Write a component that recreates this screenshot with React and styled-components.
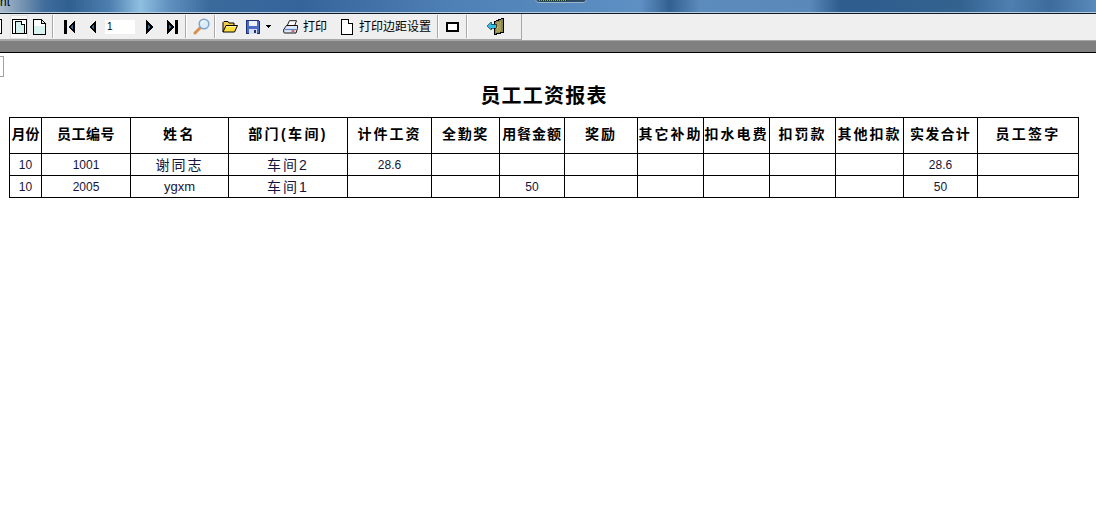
import React from "react";
import styled, { createGlobalStyle } from "styled-components";

const GlobalStyle = createGlobalStyle`
  html, body {
    margin: 0;
    padding: 0;
    background: #fff;
    overflow: hidden;
  }
`;

const Page = styled.div`
  width: 1096px;
  height: 528px;
  display: flex;
  flex-direction: column;
  font-family: "Liberation Sans", "Noto Sans CJK SC", sans-serif;
  overflow: hidden;
`;

const TitleBar = styled.div`
  position: relative;
  height: 12px;
  background: linear-gradient(
    90deg,
    #a9bccd 0,
    #7f9bb6 18px,
    #3f6c9b 45px,
    #2f6090 70px,
    #4d7fb0 110px,
    #8fbfe0 140px,
    #5f8fbd 170px,
    #3a6a9c 210px,
    #34649a 300px,
    #4f80b5 450px,
    #5f90c4 640px,
    #33618f 670px,
    #5c8bbd 700px,
    #5a88b8 810px,
    #2e5d8e 840px,
    #33628f 960px,
    #4e7fb0 1010px,
    #3d6c9c 1050px,
    #5a8abb 1096px
  );
  border-bottom: 1px solid #b9cde0;
  overflow: hidden;
`;

const TitleText = styled.span`
  display: block;
  margin-top: -5px;
  font-size: 12px;
  line-height: 14px;
  color: #000;
`;

const Meter = styled.div`
  position: absolute;
  left: 535px;
  top: -8px;
  width: 50px;
  height: 9px;
  background: #2a4a66;
  border: 1px solid #9db4c8;
  border-radius: 4px;
  &::after {
    content: "";
    position: absolute;
    left: 3px;
    bottom: 1px;
    width: 28px;
    height: 1px;
    background: repeating-linear-gradient(90deg, #3fdc4a 0 1px, #14351f 1px 2px);
  }
`;

const Toolbar = styled.div`
  height: 26px;
  display: flex;
  background: #efefef;
  border-top: 1px solid #0d1a28;
`;

const ToolGroup = styled.div`
  width: 521px;
  height: 25px;
  flex: none;
  display: flex;
  align-items: center;
  border-right: 1px solid #a8a8a8;
  border-bottom: 1px solid #a8a8a8;
  background: #efefef;
`;

const Slot = styled.div`
  flex: none;
  display: flex;
  align-items: center;
  justify-content: center;
  margin-left: ${(p) => p.$ml || 0}px;
  width: ${(p) => p.$w}px;
  height: ${(p) => p.$h || 18}px;
  background: ${(p) => (p.$pressed ? "#f8f8f8" : "transparent")};
  box-shadow: ${(p) => (p.$pressed ? "inset 0 0 0 1px #e0e0e0" : "none")};
`;

const Separator = styled.div`
  flex: none;
  width: 1px;
  height: 23px;
  margin-left: ${(p) => p.$ml}px;
  background: #a9a9a9;
  box-shadow: 1px 0 0 #fff;
`;

const PageInput = styled.div`
  flex: none;
  width: 30px;
  height: 14px;
  margin-left: 7px;
  padding-left: 2px;
  box-sizing: border-box;
  background: #fff;
  font-size: 10px;
  line-height: 14px;
  color: #000;
`;

const ToolLabel = styled.span`
  flex: none;
  margin-left: ${(p) => p.$ml}px;
  font-size: 12px;
  line-height: 16px;
  color: #000;
  white-space: nowrap;
`;

const Shade = styled.div`
  height: 11px;
  background: #808080;
  border-top: 1px solid #a6a6a6;
  border-bottom: 1px solid #000;
`;

const Content = styled.div`
  position: relative;
  flex: 1;
  padding: 29px 0 0 9px;
  background: #fff;
`;

const RulerMark = styled.div`
  position: absolute;
  left: -1px;
  top: 3px;
  width: 3px;
  height: 19px;
  border: 1px solid #a0a0a0;
  background: #fff;
`;

const ReportTitle = styled.h1`
  margin: 0;
  width: 1070px;
  height: 35px;
  font-size: 20px;
  line-height: 28px;
  font-weight: 700;
  letter-spacing: 1.2px;
  text-align: center;
  color: #000;
`;

const Sheet = styled.table`
  border-collapse: collapse;
  table-layout: fixed;
  width: 1070px;
  border: 1px solid #000;
`;

const HeadCell = styled.th`
  height: 29px;
  padding: 0 0 6px;
  border: 1px solid #000;
  font-size: 14px;
  font-weight: 700;
  letter-spacing: ${(p) => p.$ls}px;
  color: #000;
  text-align: center;
  white-space: nowrap;
  overflow: hidden;
`;

const Cell = styled.td`
  height: 21px;
  padding: 0;
  border: 1px solid #000;
  font-size: ${(p) => (p.$cjk ? 14 : p.$big ? 13 : 12)}px;
  letter-spacing: ${(p) => (p.$cjk ? 2 : 0)}px;
  line-height: 14px;
  font-weight: 400;
  color: #14143a;
  text-align: center;
  white-space: nowrap;
`;

const columns = [
  { w: 32, name: "月份", ls: 0 },
  { w: 89, name: "员工编号", ls: 0.5 },
  { w: 98, name: "姓名", ls: 2.5, big: true },
  { w: 119, name: "部门(车间)", ls: 2.4 },
  { w: 84, name: "计件工资", ls: 2 },
  { w: 68, name: "全勤奖", ls: 1.6 },
  { w: 65, name: "用餐金额", ls: 0.9 },
  { w: 73, name: "奖励", ls: 2 },
  { w: 66, name: "其它补助", ls: 2 },
  { w: 66, name: "扣水电费", ls: 2 },
  { w: 66, name: "扣罚款", ls: 2 },
  { w: 68, name: "其他扣款", ls: 2 },
  { w: 74, name: "实发合计", ls: 1.2 },
  { w: 101, name: "员工签字", ls: 2.3 },
];

const rows = [
  ["10", "1001", "谢同志", "车间2", "28.6", "", "", "", "", "", "", "", "28.6", ""],
  ["10", "2005", "ygxm", "车间1", "", "", "50", "", "", "", "", "", "50", ""],
];

const hasCjk = (v) => /[\u4e00-\u9fff]/.test(v);

const Icon = ({ w = 16, h = 16, children }) => (
  <svg width={w} height={h} viewBox={`0 0 ${w} ${h}`} shapeRendering="crispEdges">
    {children}
  </svg>
);

const PageTwo = () => (
  <Icon w={15} h={15}>
    <path d="M.5.5h14v14H.5z" fill="#fff" stroke="#000" />
    <path d="M3.500 2.500h6l3 3v9h-9z" fill="#d4f0ee" stroke="#000" />
    <path d="M9.500 2.500v3h3" fill="#fff" stroke="#000" />
  </Icon>
);

const PageOne = () => (
  <Icon w={13} h={16}>
    <path d="M.5.5h8l4 4v11H.5z" fill="#d8f2f0" stroke="#000" />
    <path d="M1 1h7v4h4v2H1z" fill="#fff" />
    <path d="M8.500.5v4h4" fill="none" stroke="#000" />
  </Icon>
);

const Arrow = ({ dir, bar }) => (
  <Icon w={13} h={14}>
    {dir === "left" ? (
      <>
        {bar && <path d="M0 0h3v14H0z" fill="#000" />}
        <path d="M11 0v14L4 7z" fill="#000" />
        <path d="M9 4v6L7 7z" fill="#2d6f9c" />
      </>
    ) : (
      <>
        {bar && <path d="M10 0h3v14h-3z" fill="#000" />}
        <path d="M2 0v14l7-7z" fill="#000" />
        <path d="M4 4v6l2-3z" fill="#2d6f9c" />
      </>
    )}
  </Icon>
);

const Magnifier = () => (
  <svg width="17" height="17" viewBox="0 0 17 17">
    <path d="M7.500 9.500L2 15" stroke="#d9904e" strokeWidth="3" strokeLinecap="round" />
    <circle cx="11" cy="6" r="4.800" fill="#d8ecfa" stroke="#7fa6c8" strokeWidth="1.500" />
    <path d="M8.500 5.500a3 3 0 0 1 3-2.500" stroke="#fff" strokeWidth="1.200" fill="none" />
  </svg>
);

const Folder = () => (
  <svg width="16" height="13" viewBox="0 0 16 13">
    <path d="M1 12V2.500L2 1.500h4l1 1.500h5v2" fill="#f3cb4c" stroke="#000" />
    <path d="M1 12l3-6.500h11.500L12.500 12z" fill="#ffdf3d" stroke="#000" strokeLinejoin="round" />
    <path d="M4.500 6.500h9.500" stroke="#fff7b0" />
  </svg>
);

const Disk = () => (
  <Icon w={14} h={14}>
    <path d="M.5.500h12l1 1v12H.5z" fill="#4a6cc8" stroke="#1d2f70" />
    <path d="M3 1h8v5H3z" fill="#eef2f8" />
    <path d="M3 9h8v5H3z" fill="#d8deea" />
    <path d="M8 10h2v3H8z" fill="#1d2f70" />
  </Icon>
);

const DropCaret = () => (
  <Icon w={5} h={3}>
    <path d="M0 0h5v1H4v1H3v1H2V2H1V1H0z" fill="#000" />
  </Icon>
);

const Printer = () => (
  <svg width="16" height="14" viewBox="0 0 16 14">
    <path d="M6.500 .7h7l-2 5.300H4z" fill="#fff" stroke="#000" strokeWidth=".9" />
    <path d="M3.500 5.500h11v3l-1.500 4.500H1.500A1 1 0 0 1 .7 12V9.500z" fill="#dfe9f6" stroke="#000" strokeWidth=".9" />
    <path d="M1.500 9.500h12" stroke="#5f86c6" strokeWidth="1.200" />
    <path d="M8.500 11h3" stroke="#d23a3a" strokeWidth="1.400" />
  </svg>
);

const PlainPage = () => (
  <Icon w={12} h={16}>
    <path d="M.5.500h7l4 4v11H.5z" fill="#fff" stroke="#000" />
    <path d="M7.500.500v4h4" fill="#fff" stroke="#000" />
  </Icon>
);

const FrameIcon = () => (
  <Icon w={13} h={10}>
    <path d="M1 1h11v8H1z" fill="#fff" stroke="#000" strokeWidth="2" />
  </Icon>
);

const ExitDoor = () => (
  <Icon w={17} h={17}>
    <path d="M7.500 3.500L15.500.500h1v14h-1l-8 2z" fill="#8b8648" stroke="#000" />
    <path d="M9 5l5-2v10l-5 2z" fill="#a5a05c" />
    <path d="M10 9h1v1h-1z" fill="#ddd" />
    <path d="M0 8l4-4v2h5v4H4v2z" fill="#2fc0e8" stroke="#000" strokeWidth=".6" />
  </Icon>
);

export default function App() {
  return (
    <Page>
      <GlobalStyle />
      <TitleBar>
        <TitleText>nt</TitleText>
        <Meter />
      </TitleBar>
      <Toolbar>
        <ToolGroup>
          <Slot $w={2} $h={15}>
            <Icon w={2} h={15}>
              <path d="M0 .5h1.500v14H0" fill="#fff" stroke="#000" />
            </Icon>
          </Slot>
          <Slot $ml={8} $w={18} $h={24} $pressed>
            <PageTwo />
          </Slot>
          <Slot $ml={4} $w={15}>
            <PageOne />
          </Slot>
          <Separator $ml={5} />
          <Slot $ml={11} $w={13}>
            <Arrow dir="left" bar />
          </Slot>
          <Slot $ml={8} $w={13}>
            <Arrow dir="left" />
          </Slot>
          <PageInput>1</PageInput>
          <Slot $ml={9} $w={13}>
            <Arrow dir="right" />
          </Slot>
          <Slot $ml={8} $w={13}>
            <Arrow dir="right" bar />
          </Slot>
          <Separator $ml={7} />
          <Slot $ml={6} $w={18}>
            <Magnifier />
          </Slot>
          <Separator $ml={4} />
          <Slot $ml={6} $w={18}>
            <Folder />
          </Slot>
          <Slot $ml={6} $w={16}>
            <Disk />
          </Slot>
          <Slot $ml={4} $w={7}>
            <DropCaret />
          </Slot>
          <Slot $ml={10} $w={18}>
            <Printer />
          </Slot>
          <ToolLabel $ml={3}>打印</ToolLabel>
          <Slot $ml={13} $w={14}>
            <PlainPage />
          </Slot>
          <ToolLabel $ml={5}>打印边距设置</ToolLabel>
          <Separator $ml={6} />
          <Slot $ml={7} $w={15}>
            <FrameIcon />
          </Slot>
          <Separator $ml={6} />
          <Slot $ml={20} $w={17}>
            <ExitDoor />
          </Slot>
        </ToolGroup>
      </Toolbar>
      <Shade />
      <Content>
        <RulerMark />
        <ReportTitle>员工工资报表</ReportTitle>
        <Sheet>
          <colgroup>
            {columns.map((c) => (
              <col key={c.name} width={c.w} />
            ))}
          </colgroup>
          <thead>
            <tr>
              {columns.map((c) => (
                <HeadCell key={c.name} $ls={c.ls}>
                  {c.name}
                </HeadCell>
              ))}
            </tr>
          </thead>
          <tbody>
            {rows.map((r) => (
              <tr key={r[1]}>
                {r.map((v, i) => (
                  <Cell key={i} $cjk={hasCjk(v)} $big={columns[i].big}>
                    {v}
                  </Cell>
                ))}
              </tr>
            ))}
          </tbody>
        </Sheet>
      </Content>
    </Page>
  );
}
